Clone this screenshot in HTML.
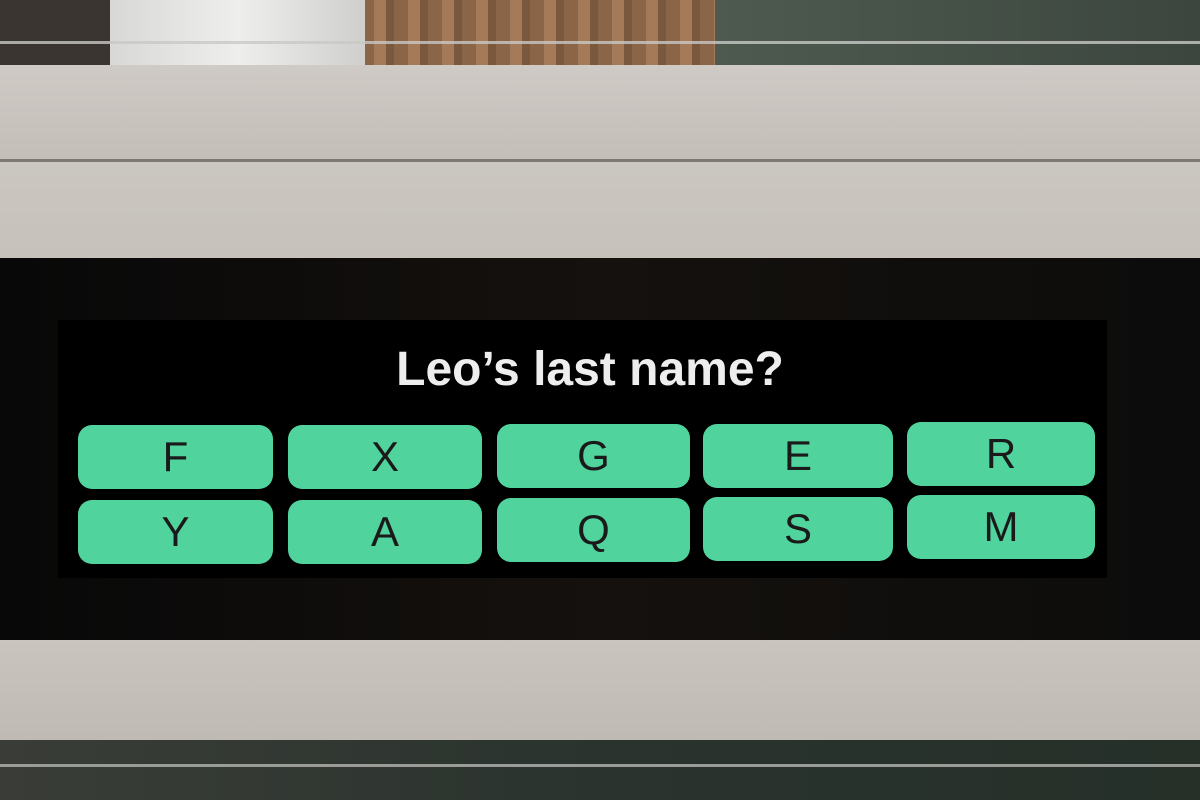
<!DOCTYPE html>
<html><head><meta charset="utf-8"><style>
*{margin:0;padding:0;box-sizing:border-box}
body{width:1200px;height:800px;overflow:hidden;position:relative;background:#2a2e2a;font-family:"Liberation Sans","DejaVu Sans",sans-serif}
.abs{position:absolute}
.btn{position:absolute;background:#50d39c;border-radius:14px;color:#1a1a1a;font-size:42px;display:flex;align-items:center;justify-content:center;height:64px}
</style></head><body>
<div class="abs" style="left:0;top:0;width:110px;height:65px;background:#3a3530"></div>
<div class="abs" style="left:360px;top:0;width:360px;height:65px;background:repeating-linear-gradient(90deg,#8a6548 0 14px,#a57a58 14px 26px,#7a583e 26px 34px)"></div>
<div class="abs" style="left:715px;top:0;width:485px;height:65px;background:linear-gradient(90deg,#4e5a4f,#3c463f)"></div>
<div class="abs" style="left:110px;top:0;width:255px;height:65px;background:linear-gradient(90deg,#d8d8d6,#eeeeec 50%,#cfcfcd)"></div>
<div class="abs" style="left:0;top:41px;width:1200px;height:3px;background:#c8c8c6;opacity:.8"></div>
<div class="abs" style="left:0;top:65px;width:1200px;height:95px;background:linear-gradient(180deg,#cfcac5,#c3beb8)"></div>
<div class="abs" style="left:0;top:159px;width:1200px;height:3px;background:#7d7873"></div>
<div class="abs" style="left:0;top:162px;width:1200px;height:96px;background:linear-gradient(180deg,#cbc6c0,#c6c1bb)"></div>
<div class="abs" style="left:0;top:258px;width:1200px;height:382px;background:linear-gradient(90deg,#080808,#15110e 50%,#0c0c0c)"></div>
<div class="abs" style="left:58px;top:320px;width:1049px;height:258px;background:#000"></div>
<div class="abs" style="left:58px;top:342px;width:1064px;text-align:center;color:#eee;font-size:48px;font-weight:bold">Leo’s last name?</div>
<div class="btn" style="left:78px;top:425px;width:195px">F</div>
<div class="btn" style="left:288px;top:425px;width:194px">X</div>
<div class="btn" style="left:497px;top:424px;width:193px">G</div>
<div class="btn" style="left:703px;top:424px;width:190px">E</div>
<div class="btn" style="left:907px;top:422px;width:188px">R</div>
<div class="btn" style="left:78px;top:500px;width:195px">Y</div>
<div class="btn" style="left:288px;top:500px;width:194px">A</div>
<div class="btn" style="left:497px;top:498px;width:193px">Q</div>
<div class="btn" style="left:703px;top:497px;width:190px">S</div>
<div class="btn" style="left:907px;top:495px;width:188px">M</div>
<div class="abs" style="left:0;top:640px;width:1200px;height:100px;background:linear-gradient(180deg,#c9c4be,#bfbab4)"></div>
<div class="abs" style="left:0;top:740px;width:1200px;height:60px;background:linear-gradient(90deg,#3a3d37,#2a332e 50%,#263029)"></div>
<div class="abs" style="left:0;top:764px;width:1200px;height:3px;background:#9a9c98"></div>
</body></html>
